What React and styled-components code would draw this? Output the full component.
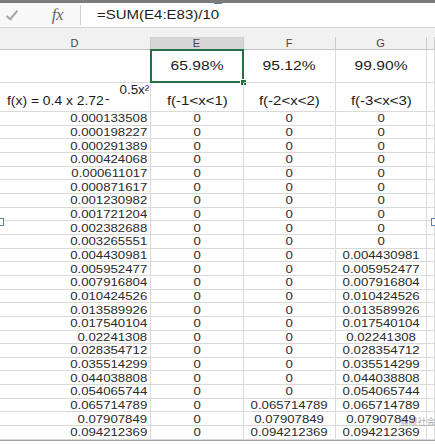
import React from 'react'
import styled, { createGlobalStyle } from 'styled-components'

const GlobalStyle = createGlobalStyle`
  html, body {
    margin: 0;
    padding: 0;
    background: #ffffff;
  }
  body {
    font-family: "Liberation Sans", Arial, sans-serif;
  }
`

const dValues = [
    '0.000133508', '0.000198227', '0.000291389', '0.000424068', '0.000611017',
    '0.000871617', '0.001230982', '0.001721204', '0.002382688', '0.003265551',
    '0.004430981', '0.005952477', '0.007916804', '0.010424526', '0.013589926',
    '0.017540104', '0.02241308', '0.028354712', '0.035514299', '0.044038808',
    '0.054065744', '0.065714789', '0.07907849', '0.094212369'
]

const rows = dValues.map((d, i) => ({
    d,
    e: '0',
    f: i >= 21 ? d : '0',
    g: i >= 10 ? d : '0'
}))

class App extends React.Component {
    render() {
        return (
            <Frame>
                <GlobalStyle />
                <TopHandle />
                <FormulaBar>
                    <Tools>
                        <CheckMark />
                        <Fx>fx</Fx>
                    </Tools>
                    <Divider />
                    <Formula>
                        <Txt $sx={1.2} $origin="left">=SUM(E4:E83)/10</Txt>
                    </Formula>
                </FormulaBar>
                <Band />

                <Sheet>
                    <ColHead>D</ColHead>
                    <ColHead $active>E</ColHead>
                    <ColHead>F</ColHead>
                    <ColHead>G</ColHead>
                    <ColHead />

                    <Cell />
                    <Cell $big $selected>
                        <Txt>65.98%</Txt>
                        <FillHandle />
                    </Cell>
                    <Cell $big><Txt>95.12%</Txt></Cell>
                    <Cell $big><Txt>99.90%</Txt></Cell>
                    <Cell />

                    <Cell $head $align="left">
                        <Txt $sx={1.11} $origin="left">
                            f(x) = 0.4 x 2.72<Minus>-</Minus><Exp>0.5x²</Exp>
                        </Txt>
                    </Cell>
                    <Cell $head><Txt $sx={1.2}>f(-1&lt;x&lt;1)</Txt></Cell>
                    <Cell $head><Txt $sx={1.2}>f(-2&lt;x&lt;2)</Txt></Cell>
                    <Cell $head><Txt $sx={1.2}>f(-3&lt;x&lt;3)</Txt></Cell>
                    <Cell />

                    {rows.map((r, i) => (
                        <React.Fragment key={i}>
                            <Cell $data $align="right"><Txt $origin="right">{r.d}</Txt></Cell>
                            <Cell $data><Txt>{r.e}</Txt></Cell>
                            <Cell $data><Txt>{r.f}</Txt></Cell>
                            <Cell $data><Txt>{r.g}</Txt></Cell>
                            <Cell $data />
                        </React.Fragment>
                    ))}
                </Sheet>
                <BottomEdge />

                <SideHandle $side="left" />
                <SideHandle $side="right" />
                <Watermark>◔ 猫眼社会</Watermark>
            </Frame>
        )
    }
}

const Frame = styled.div`
    position: relative;
    width: 435px;
    height: 444px;
    overflow: hidden;
    box-sizing: border-box;
    border-top: 3px solid #7b7b7b;
    background: #ffffff;
`

const FormulaBar = styled.div`
    display: flex;
    height: 25px;
    box-sizing: border-box;
    border-bottom: 1px solid #d4d4d4;
    background: #ffffff;
`

const Tools = styled.div`
    width: 80px;
    display: flex;
    align-items: center;
    padding-left: 9px;
    box-sizing: border-box;
    background: #f8f8f8;
`

// checkmark drawn as a rotated corner
const CheckMark = styled.span`
    display: block;
    flex: 0 0 auto;
    width: 4px;
    height: 10px;
    margin-top: -3px;
    border-right: 2px solid #a3a3a3;
    border-bottom: 2px solid #a3a3a3;
    transform: rotate(40deg);
`

const Fx = styled.span`
    margin-left: auto;
    margin-right: 17px;
    font-family: "Liberation Serif", "Times New Roman", serif;
    font-style: italic;
    font-size: 17px;
    color: #666666;
    letter-spacing: -0.5px;
`

const Divider = styled.div`
    width: 1px;
    margin: 2px 0;
    background: #cfcfcf;
`

const Formula = styled.div`
    flex: 1;
    display: flex;
    align-items: center;
    padding-left: 16px;
    font-size: 12.5px;
    color: #1c1c1c;
`

const Band = styled.div`
    height: 9px;
    background: #f1f1f1;
`

const Sheet = styled.div`
    display: grid;
    grid-template-columns: 151px 93px 92px 91px 8px;
    grid-template-rows: 13px 33px 29px repeat(24, 13.667px);
`

const Txt = styled.span`
    display: inline-block;
    white-space: nowrap;
    transform: scaleX(${p => p.$sx || 1.2});
    transform-origin: ${p => p.$origin || 'center'};
`

const ColHead = styled.div`
    display: flex;
    align-items: center;
    justify-content: center;
    box-sizing: border-box;
    background: ${p => (p.$active ? '#d6d6d6' : '#f1f1f1')};
    border-right: 1px solid #cbcbcb;
    border-bottom: 1px solid ${p => (p.$active ? '#217346' : '#c4c4c4')};
    color: #454545;
    font-size: 11px;
    line-height: 12px;
    letter-spacing: 1px;
`

const Cell = styled.div`
    position: relative;
    display: flex;
    align-items: ${p => (p.$head ? 'flex-end' : 'center')};
    justify-content: ${p => (p.$align === 'right' ? 'flex-end' : p.$align === 'left' ? 'flex-start' : 'center')};
    box-sizing: border-box;
    padding: ${p => (p.$head ? '0 3px 2px' : '0 3px')};
    padding-left: ${p => (p.$align === 'left' ? '7px' : '3px')};
    border-right: 1px solid #dadada;
    border-bottom: 1px solid #dadada;
    color: ${p => (p.$data ? '#2a2a2a' : '#1c1c1c')};
    font-size: ${p => (p.$big ? '13px' : p.$head ? '12.5px' : '11px')};
    line-height: ${p => (p.$head ? '15px' : '12px')};
    box-shadow: ${p => (p.$selected ? 'inset 0 0 0 2px #217346' : 'none')};
    ${p => p.$selected && 'margin: -1px 0 0 -1px; border-right: none; border-bottom: none; width: calc(100% + 1px); height: calc(100% + 1px);'}
`

const FillHandle = styled.span`
    position: absolute;
    right: -3px;
    bottom: -3px;
    width: 5px;
    height: 5px;
    background: #217346;
    border: 1px solid #ffffff;
`

const Minus = styled.span`
    position: relative;
    top: -2px;
    margin-left: 1px;
`

const Exp = styled.span`
    position: relative;
    top: -11px;
    margin-left: 9px;
    font-size: 12px;
`

const BottomEdge = styled.div`
    height: 4px;
    border-top: 1px solid #a3a3a3;
    background: #ffffff;
`

const SideHandle = styled.span`
    position: absolute;
    top: 215px;
    ${p => (p.$side === 'left' ? 'left: -1px;' : 'right: -1px;')}
    width: 3px;
    height: 6px;
    border: 1px solid #5d80a6;
    background: #ffffff;
`

const TopHandle = styled.span`
    position: absolute;
    top: -3px;
    left: 214px;
    width: 6px;
    height: 2px;
    border: 1px solid #5d80a6;
    background: #ffffff;
`

const Watermark = styled.span`
    position: absolute;
    left: 392px;
    top: 412px;
    font-family: "Noto Sans CJK SC", sans-serif;
    font-size: 9px;
    color: rgba(110, 110, 110, 0.55);
    white-space: nowrap;
`

export default App
